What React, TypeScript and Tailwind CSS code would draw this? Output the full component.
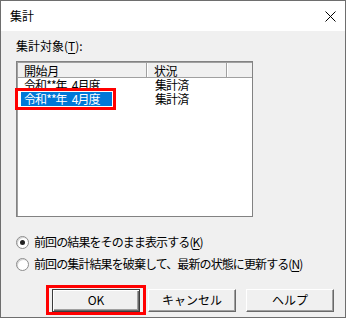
import React from 'react';

const FONT = "font-['MS_UI_Gothic','Noto_Sans_CJK_JP',sans-serif]";

const rows = [
    { era: '令和**年', month: '4月度', status: '集計済', selected: false },
    { era: '令和**年', month: '4月度', status: '集計済', selected: true },
];

const Radio = ({ checked, children }: { checked: boolean; children: React.ReactNode }) => (
    <div className="flex items-center h-[14px] pl-[15px]">
        <div className="w-[13px] h-[13px] rounded-full border border-[#8c8c8c] bg-white flex items-center justify-center shadow-[inset_1px_1px_0_#d4d4d4]">
            {checked && <div className="w-[5px] h-[5px] rounded-full bg-[#222]" />}
        </div>
        <span className="ml-[5px] text-[12px] leading-[14px] tracking-[-0.9px] text-black whitespace-nowrap">{children}</span>
    </div>
);

const Button = ({ label, isDefault }: { label: string; isDefault?: boolean }) => (
    <button
        className={`w-[88px] h-[23px] bg-[#f0f0f0] text-[12px] leading-none text-black flex items-center justify-center ${
            isDefault
                ? 'border border-[#3c3c3c] shadow-[inset_1px_1px_0_#fff,inset_-1px_-1px_0_#696969,inset_-2px_-2px_0_#a0a0a0]'
                : 'border border-t-white border-l-white border-r-[#696969] border-b-[#696969] shadow-[inset_-1px_-1px_0_#a0a0a0]'
        }`}
    >
        {label}
    </button>
);

export default function App() {
    return (
        <div className={`${FONT} w-[346px] h-[318px] border border-[#6e6e6e] flex flex-col bg-[#f0f0f0] overflow-hidden`}>
            {/* Title bar */}
            <div className="h-[30px] bg-white flex items-center justify-between pl-[9px] pr-[9px] shrink-0">
                <span className="text-[12px] leading-none text-black">集計</span>
                <svg width="11" height="11" viewBox="0 0 11 11">
                    <path d="M0.5 0.5 L10.5 10.5 M10.5 0.5 L0.5 10.5" stroke="#000" strokeWidth="1" />
                </svg>
            </div>

            {/* Body */}
            <div className="flex flex-col pt-[9px]">
                <div className="pl-[15px] text-[12px] leading-[12px] text-black">
                    集計対象(<span className="underline underline-offset-2">T</span>):
                </div>

                {/* List view */}
                <div className="relative ml-[15px] mt-[9px] w-[237px] h-[156px]">
                    <div className="w-full h-full bg-white border border-[#828282] shadow-[inset_1px_1px_0_#a0a0a0] pt-[1px] pl-[1px]">
                        <div className="flex h-[15px] bg-[#f0f0f0] border-b border-[#a0a0a0] text-[12px] leading-[15px] tracking-[-0.4px] text-black">
                            <div className="w-[129px] pl-[6px] border-r border-[#a0a0a0]">開始月</div>
                            <div className="w-[80px] pl-[7px] border-r border-[#a0a0a0] shadow-[inset_1px_0_0_#fff]">状況</div>
                            <div className="flex-1 shadow-[inset_1px_0_0_#fff]" />
                        </div>
                        {rows.map((r, i) => (
                            <div key={i} className="flex h-[14px] text-[12px] leading-[14px] tracking-[-0.9px] whitespace-nowrap">
                                <div className="w-[129px] pl-[3px]">
                                    <span className={`inline-flex w-[91px] pl-[3px] ${r.selected ? 'bg-[#0078d7] text-white' : 'text-black'}`}>
                                        <span>{r.era}</span>
                                        <span className="ml-[5px]">{r.month}</span>
                                    </span>
                                </div>
                                <div className="pl-[8px] text-black">{r.status}</div>
                            </div>
                        ))}
                    </div>
                    {/* Annotation highlight */}
                    <div className="absolute left-[-1px] top-[27px] w-[101px] h-[22px] border-[3px] border-[#ff0000]" />
                </div>

                <div className="mt-[18px] flex flex-col gap-[8px]">
                    <Radio checked>
                        前回の結果をそのまま表示する(<span className="underline underline-offset-2">K</span>)
                    </Radio>
                    <Radio checked={false}>
                        前回の集計結果を破棄して、最新の状態に更新する(<span className="underline underline-offset-2">N</span>)
                    </Radio>
                </div>

                <div className="mt-[14px] pl-[45px] flex items-center">
                    <div className="w-[100px] h-[30px] border-[3px] border-[#ff0000] flex items-center pl-[3px]">
                        <Button label="OK" isDefault />
                    </div>
                    <div className="ml-[2px]">
                        <Button label="キャンセル" />
                    </div>
                    <div className="ml-[10px]">
                        <Button label="ヘルプ" />
                    </div>
                </div>
            </div>
        </div>
    );
}
